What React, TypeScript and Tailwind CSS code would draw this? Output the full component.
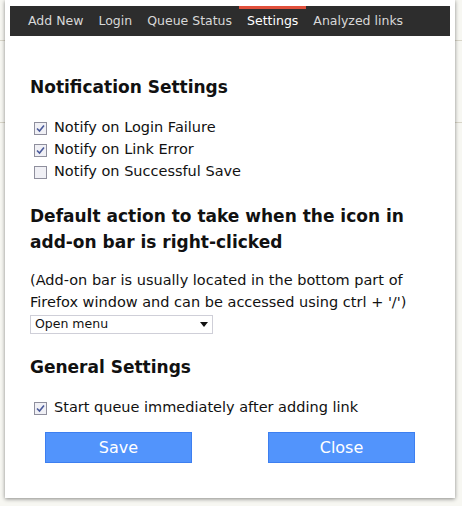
export default function App() {
  const tabs = ["Add New", "Login", "Queue Status", "Settings", "Analyzed links"];
  const cb = (label: string, checked: boolean) => (
    <label className="flex items-center h-[22px] gap-[7px]">
      <span className="w-[13px] h-[13px] border border-[#8f8f9d] bg-[#f0f0f5] flex items-center justify-center">
        {checked && (
          <svg width="9" height="9" viewBox="0 0 9 9"><path d="M1 4.5 L3.5 7 L8 1.5" stroke="#4a5a9a" strokeWidth="1.6" fill="none" /></svg>
        )}
      </span>
      <span>{label}</span>
    </label>
  );
  return (
    <div className="w-[462px] h-[506px] bg-[#f7f7f2] relative overflow-hidden" style={{ fontFamily: '"DejaVu Sans", Tahoma, sans-serif' }}>
      <div className="absolute left-0 right-0 top-[40px] h-px bg-[#d8d5c8]" />
      <div className="absolute left-0 right-0 top-[122px] h-px bg-[#d8d5c8]" />
      <div className="absolute left-[5px] top-0 w-[450px] h-[498px] bg-white shadow-[0_1px_4px_rgba(0,0,0,0.45)] px-[5px] pt-[6px] text-[14.5px] text-[#111]">
        <div className="h-[30px] bg-[#2d2d2d] flex pl-[18px] gap-[15px] text-[12.5px] text-[#d8d8d8]">
          {tabs.map((t) => (
            <div key={t} className={"relative flex items-center h-full " + (t === "Settings" ? "text-white" : "")}>
              {t === "Settings" && <div className="absolute left-[-8px] right-[-8px] top-0 h-[3px] bg-[#e0503c]" />}
              {t}
            </div>
          ))}
        </div>
        <div className="px-[20px]">
          <div className="mt-[40px] text-[17px] font-bold leading-[22px]">Notification Settings</div>
          <div className="mt-[19px] pl-[4px]">
            {cb("Notify on Login Failure", true)}
            {cb("Notify on Link Error", true)}
            {cb("Notify on Successful Save", false)}
          </div>
          <div className="mt-[20px] text-[17px] font-bold leading-[26px]">Default action to take when the icon in add-on bar is right-clicked</div>
          <div className="mt-[14px] leading-[22px]">(Add-on bar is usually located in the bottom part of Firefox window and can be accessed using ctrl + '/')</div>
          <div className="mt-[2px] w-[183px] h-[19px] border border-[#cfcfd8] flex items-center justify-between px-[4px] text-[12.5px]">
            <span>Open menu</span>
            <svg width="8" height="5" viewBox="0 0 8 5"><path d="M0 0H8L4 5Z" fill="#111" /></svg>
          </div>
          <div className="mt-[22px] text-[17px] font-bold leading-[22px]">General Settings</div>
          <div className="mt-[19px] pl-[4px]">{cb("Start queue immediately after adding link", true)}</div>
          <div className="mt-[13px] flex justify-between px-[15px]">
            <button className="w-[147px] h-[31px] bg-[#5294fc] border border-[#3d7ff0] text-white text-[16px]">Save</button>
            <button className="w-[147px] h-[31px] bg-[#5294fc] border border-[#3d7ff0] text-white text-[16px]">Close</button>
          </div>
        </div>
      </div>
    </div>
  );
}
